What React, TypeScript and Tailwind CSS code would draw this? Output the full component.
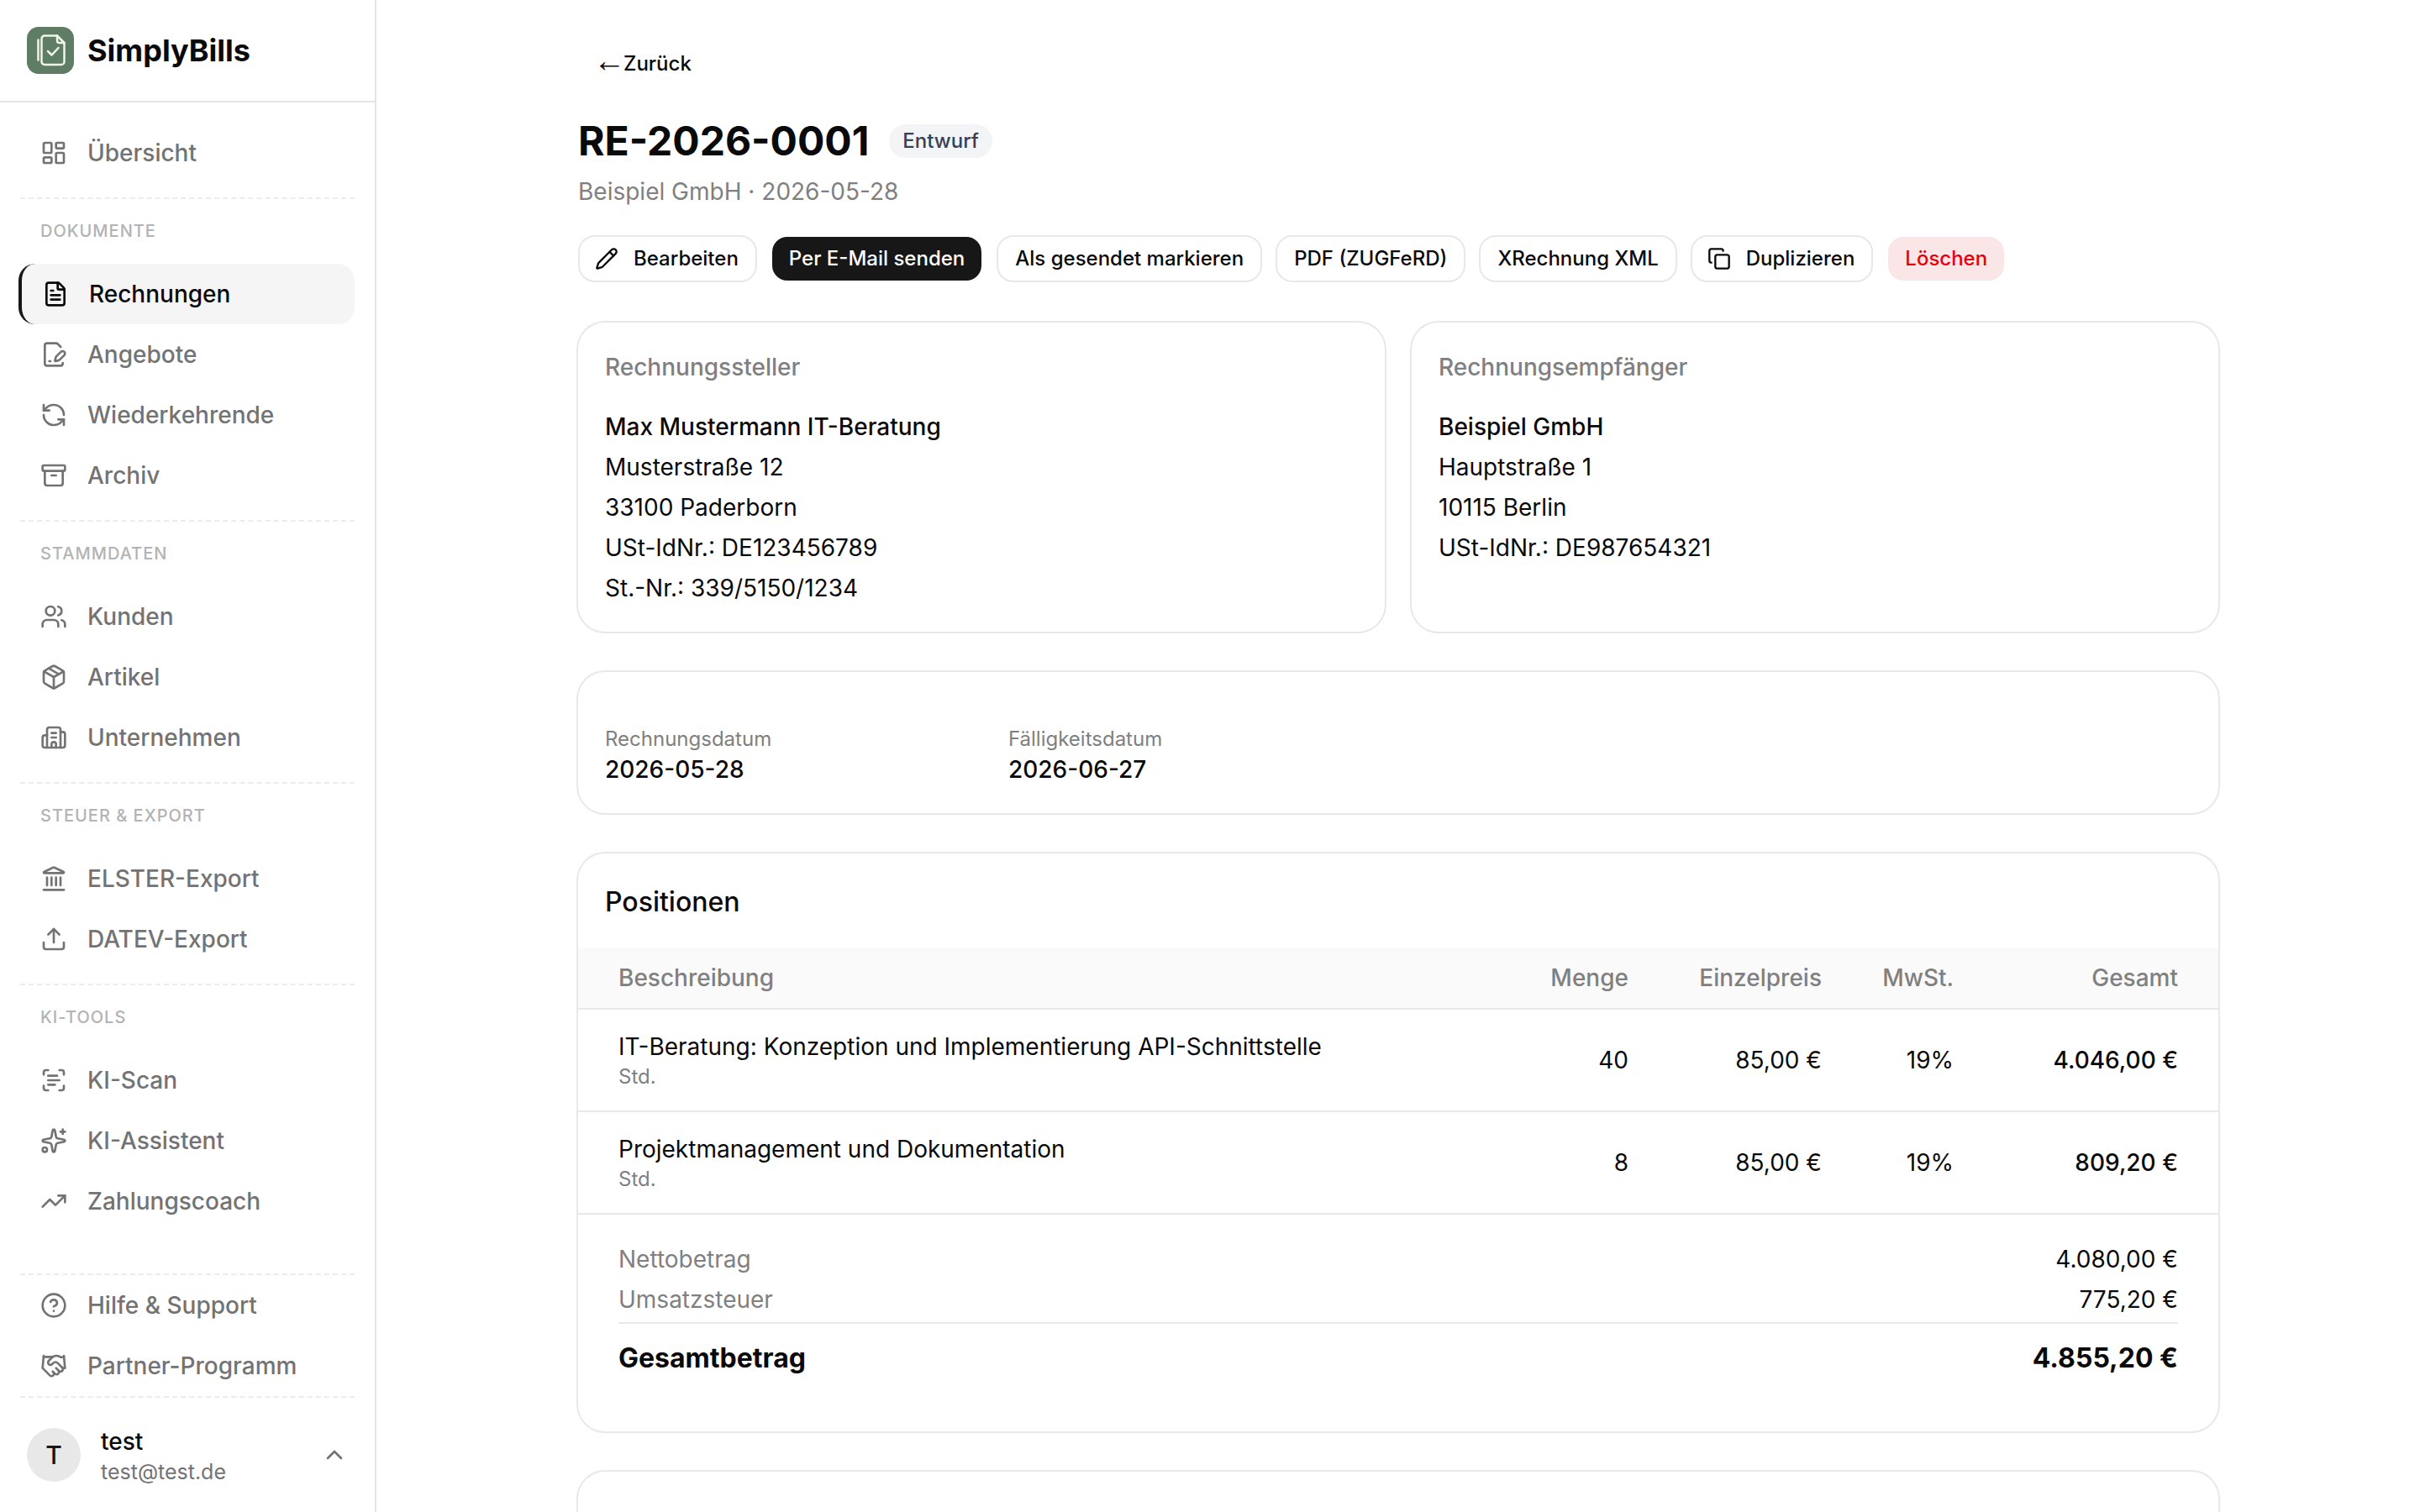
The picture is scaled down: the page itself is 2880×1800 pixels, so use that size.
import {
  Archive,
  Building2,
  ChevronUp,
  CircleHelp,
  Copy,
  FilePenLine,
  FileText,
  Handshake,
  Landmark,
  LayoutDashboard,
  Package,
  Pencil,
  RefreshCcw,
  ScanText,
  Sparkles,
  TrendingUp,
  Upload,
  Users,
} from "lucide-react";
import type { ReactNode } from "react";

type NavEntry = { label: string; icon: ReactNode; active?: boolean };

const Divider = () => <div className="border-t-2 border-dashed border-[#ececec]" />;

const SectionDivider = () => (
  <div className="pt-[17px]">
    <Divider />
  </div>
);

const SectionLabel = ({ children }: { children: ReactNode }) => (
  <div className="pl-[24px] pt-[25px] pb-[26px] text-[20px] leading-[26px] font-medium tracking-[1px] uppercase text-[#b3b3b3]">
    {children}
  </div>
);

function NavItem({ label, icon, active }: NavEntry) {
  if (active) {
    return (
      <div className="-ml-[2px] flex h-[72px] items-center gap-[24px] rounded-[20px] border-l-4 border-[#171717] bg-[#f5f5f5] pl-[24px] text-[28px] font-medium text-[#0a0a0a]">
        {icon}
        {label}
      </div>
    );
  }
  return (
    <div className="flex h-[72px] items-center gap-[24px] pl-[24px] text-[28px] font-medium text-[#737373]">
      {icon}
      {label}
    </div>
  );
}

const iconCls = "h-[32px] w-[32px] shrink-0";

function Sidebar() {
  return (
    <aside className="flex h-full w-[448px] shrink-0 flex-col border-r-2 border-[#e5e5e5] bg-white">
      {/* Logo */}
      <div className="flex h-[122px] shrink-0 items-center gap-[16px] border-b-2 border-[#e5e5e5] pl-[32px]">
        <div className="flex h-[56px] w-[56px] items-center justify-center rounded-[14px] bg-[#5f7c65]">
          <svg viewBox="0 0 56 56" className="h-[56px] w-[56px]" fill="none" stroke="#f0f5e6" strokeWidth="2.5" strokeLinecap="round" strokeLinejoin="round">
            <path d="M13.5 15.5v24" />
            <path d="M36 10.5H21a3.5 3.5 0 0 0-3.5 3.5v27.5a3.5 3.5 0 0 0 3.5 3.5h20a3.5 3.5 0 0 0 3.5-3.5V19z" />
            <path d="M36 10.5v6a2.5 2.5 0 0 0 2.5 2.5h6" />
            <path d="M25 29l4.5 4.5L37.5 25" />
          </svg>
        </div>
        <span className="text-[36px] font-bold text-[#0a0a0a]">SimplyBills</span>
      </div>

      {/* Navigation */}
      <nav className="flex flex-1 flex-col px-[24px] pt-[24px]">
        <NavItem label="Übersicht" icon={<LayoutDashboard className={iconCls} />} />
        <SectionDivider />
        <SectionLabel>Dokumente</SectionLabel>
        <NavItem label="Rechnungen" active icon={<FileText className={iconCls} />} />
        <NavItem label="Angebote" icon={<FilePenLine className={iconCls} />} />
        <NavItem label="Wiederkehrende" icon={<RefreshCcw className={iconCls} />} />
        <NavItem label="Archiv" icon={<Archive className={iconCls} />} />
        <SectionDivider />
        <SectionLabel>Stammdaten</SectionLabel>
        <NavItem label="Kunden" icon={<Users className={iconCls} />} />
        <NavItem label="Artikel" icon={<Package className={iconCls} />} />
        <NavItem label="Unternehmen" icon={<Building2 className={iconCls} />} />
        <SectionDivider />
        <SectionLabel>Steuer &amp; Export</SectionLabel>
        <NavItem label="ELSTER-Export" icon={<Landmark className={iconCls} />} />
        <NavItem label="DATEV-Export" icon={<Upload className={iconCls} />} />
        <SectionDivider />
        <SectionLabel>KI-Tools</SectionLabel>
        <NavItem label="KI-Scan" icon={<ScanText className={iconCls} />} />
        <NavItem label="KI-Assistent" icon={<Sparkles className={iconCls} />} />
        <NavItem label="Zahlungscoach" icon={<TrendingUp className={iconCls} />} />
        <div className="mt-auto">
          <Divider />
        </div>
        <NavItem label="Hilfe & Support" icon={<CircleHelp className={iconCls} />} />
        <NavItem label="Partner-Programm" icon={<Handshake className={iconCls} />} />
        <Divider />
        {/* User */}
        <div className="flex h-[136px] shrink-0 items-center pl-[8px] pr-[8px]">
          <div className="flex h-[64px] w-[64px] items-center justify-center rounded-full bg-[#e8e8e8] text-[30px] font-medium text-[#171717]">
            T
          </div>
          <div className="ml-[24px] flex-1 pt-[3px]">
            <div className="text-[28px] leading-[34px] font-medium text-[#0a0a0a]">test</div>
            <div className="mt-[2px] text-[25px] leading-[34px] text-[#737373]">test@test.de</div>
          </div>
          <ChevronUp className="h-[32px] w-[32px] text-[#737373]" />
        </div>
      </nav>
    </aside>
  );
}

function ActionButton({ children, primary, danger, withIcon }: { children: ReactNode; primary?: boolean; danger?: boolean; withIcon?: boolean }) {
  const tone = primary
    ? "border-transparent bg-[#171717] bg-clip-padding text-white"
    : danger
      ? "border-transparent bg-[#fbe6e7] bg-clip-padding text-[#e7000b]"
      : "border-[#e8e8e8] bg-white text-[#0a0a0a]";
  return (
    <button className={`flex h-[56px] items-center rounded-[20px] border-2 text-[24px] font-medium ${withIcon ? "gap-[18px] pl-[18px] pr-[20px]" : "px-[20px]"} ${tone}`}>
      {children}
    </button>
  );
}

function AddressCard({ title, lines }: { title: string; lines: string[] }) {
  return (
    <div className="h-[368px] rounded-[32px] px-[32px] pt-[35px] ring-2 ring-[#e8e8e8]">
      <div className="mb-[29px] text-[28px] leading-[36px] font-medium text-[#808080]">{title}</div>
      <div className="text-[28px] leading-[48px] text-[#0a0a0a]">
        {lines.map((line, i) => (
          <div key={line} className={i === 0 ? "font-medium" : ""}>
            {line}
          </div>
        ))}
      </div>
    </div>
  );
}

const colCls = "grid grid-cols-[1fr_230px_157px_267px] items-center px-[48px]";

function ItemRow({ desc, qty, total }: { desc: string; qty: string; total: string }) {
  return (
    <div className="flex h-[122px] items-center border-b-2 border-[#e8e8e8] px-[48px] text-[28px] text-[#0a0a0a]">
      <div className="flex-1 pt-[4px]">
        <div className="leading-[36px]">{desc}</div>
        <div className="text-[24px] leading-[36px] text-[#808080]">Std.</div>
      </div>
      <div className="w-[100px] text-right">{qty}</div>
      <div className="w-[230px] text-right">85,00 €</div>
      <div className="w-[157px] text-right">19%</div>
      <div className="w-[267px] text-right font-medium">{total}</div>
    </div>
  );
}

export default function App() {
  return (
    <div className="flex h-[1800px] overflow-hidden bg-white font-['Inter',sans-serif]">
      <Sidebar />
      <main className="flex-1 overflow-hidden">
        <div className="mx-auto max-w-[2048px] px-[48px]">
          <div className="mt-[40px] flex h-[72px] items-center pl-[18px] text-[24px] font-medium text-[#0a0a0a]">
            <span className="-mr-[2px] -translate-y-[4px] font-['Liberation_Sans',sans-serif] text-[38px] leading-none font-normal">←</span>
            Zurück
          </div>

          <div className="mt-[26px] flex items-center gap-[24px]">
            <h1 className="text-[48px] leading-[60px] font-bold text-[#0a0a0a]">RE-2026-0001</h1>
            <span className="flex h-[40px] items-center rounded-full bg-[#f3f4f6] px-[16px] text-[24px] font-medium text-[#364153]">
              Entwurf
            </span>
          </div>
          <div className="mt-[10px] text-[28px] leading-[40px] text-[#808080]">Beispiel GmbH · 2026-05-28</div>

          <div className="mt-[32px] flex gap-[16px]">
            <ActionButton withIcon>
              <Pencil className="h-[28px] w-[28px]" />
              Bearbeiten
            </ActionButton>
            <ActionButton primary>Per E-Mail senden</ActionButton>
            <ActionButton>Als gesendet markieren</ActionButton>
            <ActionButton>PDF (ZUGFeRD)</ActionButton>
            <ActionButton>XRechnung XML</ActionButton>
            <ActionButton withIcon>
              <Copy className="h-[28px] w-[28px]" />
              Duplizieren
            </ActionButton>
            <ActionButton danger>Löschen</ActionButton>
          </div>

          <div className="mt-[48px] grid grid-cols-2 gap-[32px]">
            <AddressCard
              title="Rechnungssteller"
              lines={["Max Mustermann IT-Beratung", "Musterstraße 12", "33100 Paderborn", "USt-IdNr.: DE123456789", "St.-Nr.: 339/5150/1234"]}
            />
            <AddressCard title="Rechnungsempfänger" lines={["Beispiel GmbH", "Hauptstraße 1", "10115 Berlin", "USt-IdNr.: DE987654321"]} />
          </div>

          <div className="mt-[48px] grid h-[168px] grid-cols-4 gap-[32px] rounded-[32px] px-[32px] pt-[63px] ring-2 ring-[#e8e8e8]">
            <div>
              <div className="text-[24px] leading-[34px] text-[#808080]">Rechnungsdatum</div>
              <div className="text-[28px] leading-[38px] font-medium text-[#0a0a0a]">2026-05-28</div>
            </div>
            <div>
              <div className="text-[24px] leading-[34px] text-[#808080]">Fälligkeitsdatum</div>
              <div className="text-[28px] leading-[38px] font-medium text-[#0a0a0a]">2026-06-27</div>
            </div>
          </div>

          {/* Positionen */}
          <div className="mt-[48px] h-[688px] overflow-hidden rounded-[32px] ring-2 ring-[#e8e8e8]">
            <div className="flex h-[112px] items-center px-[32px] pt-[3px] text-[32px] font-medium text-[#0a0a0a]">Positionen</div>
            <div className={`${colCls} h-[74px] border-b-2 border-[#e8e8e8] bg-[#fafafa] text-[28px] font-medium text-[#808080]`}>
              <div className="flex">
                <div className="flex-1">Beschreibung</div>
                <div>Menge</div>
              </div>
              <div className="text-right">Einzelpreis</div>
              <div className="text-right">MwSt.</div>
              <div className="text-right">Gesamt</div>
            </div>
            <ItemRow desc="IT-Beratung: Konzeption und Implementierung API-Schnittstelle" qty="40" total="4.046,00 €" />
            <ItemRow desc="Projektmanagement und Dokumentation" qty="8" total="809,20 €" />
            <div className="px-[48px] pt-[29px]">
              <div className="flex justify-between text-[28px] leading-[48px] text-[#808080]">
                <span>Nettobetrag</span>
                <span className="text-[#0a0a0a]">4.080,00 €</span>
              </div>
              <div className="flex justify-between text-[28px] leading-[48px] text-[#808080]">
                <span>Umsatzsteuer</span>
                <span className="text-[#0a0a0a]">775,20 €</span>
              </div>
              <div className="mt-[3px] flex items-center justify-between border-t-2 border-[#e8e8e8] pt-[19px] text-[32px] leading-[44px] font-bold text-[#0a0a0a]">
                <span>Gesamtbetrag</span>
                <span>4.855,20 €</span>
              </div>
            </div>
          </div>

          <div className="mt-[48px] h-[200px] rounded-[32px] ring-2 ring-[#e8e8e8]" />
        </div>
      </main>
    </div>
  );
}
